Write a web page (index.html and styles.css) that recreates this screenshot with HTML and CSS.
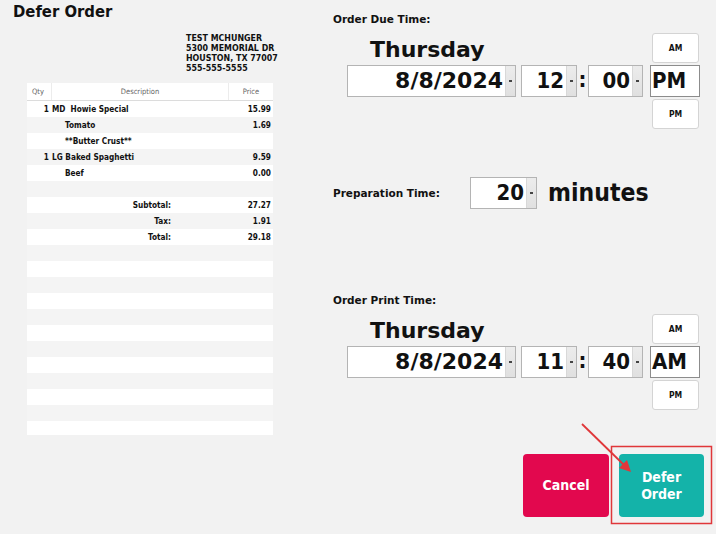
FILE: index.html
```html
<!DOCTYPE html>
<html>
<head>
<meta charset="utf-8">
<link rel="stylesheet" href="styles.css">
</head>
<body>
<div class="page">
  <section class="receipt-pane">
    <h1 class="title">Defer Order</h1>
    <div class="addr">
      <div>TEST MCHUNGER</div>
      <div>5300 MEMORIAL DR</div>
      <div>HOUSTON, TX 77007</div>
      <div>555-555-5555</div>
    </div>
    <div class="ticket">
      <div class="thead">
        <span class="h-qty">Qty</span>
        <span class="h-desc">Description</span>
        <span class="h-price">Price</span>
      </div>
      <div class="tbody">
        <div class="row"><span class="qty">1</span><span class="desc">MD&nbsp; Howie Special</span><span class="price">15.99</span></div>
        <div class="row"><span class="qty"></span><span class="desc mod">Tomato</span><span class="price">1.69</span></div>
        <div class="row"><span class="qty"></span><span class="desc mod">**Butter Crust**</span><span class="price"></span></div>
        <div class="row"><span class="qty">1</span><span class="desc">LG Baked Spaghetti</span><span class="price">9.59</span></div>
        <div class="row"><span class="qty"></span><span class="desc mod">Beef</span><span class="price">0.00</span></div>
        <div class="row"></div>
        <div class="row"><span class="qty"></span><span class="desc sum">Subtotal:</span><span class="price">27.27</span></div>
        <div class="row"><span class="qty"></span><span class="desc sum">Tax:</span><span class="price">1.91</span></div>
        <div class="row"><span class="qty"></span><span class="desc sum">Total:</span><span class="price">29.18</span></div>
        <div class="row"></div>
        <div class="row"></div>
        <div class="row"></div>
        <div class="row"></div>
        <div class="row"></div>
        <div class="row"></div>
        <div class="row"></div>
        <div class="row"></div>
        <div class="row"></div>
        <div class="row"></div>
        <div class="row"></div>
        <div class="row"></div>
        <div class="row"></div>
      </div>
    </div>
  </section>

  <section class="time-pane">
    <div class="label">Order Due Time:</div>
    <div class="picker">
      <div class="pick-top">
        <span class="day">Thursday</span>
        <span class="ampm-btn">AM</span>
      </div>
      <div class="pick-mid">
        <div class="spin date"><span class="val">8/8/2024</span><span class="drop"></span></div>
        <div class="spin hour"><span class="val">12</span><span class="drop"></span></div>
        <span class="colon">:</span>
        <div class="spin minute"><span class="val">00</span><span class="drop"></span></div>
        <div class="ampm-box">PM</div>
      </div>
      <div class="pick-bot">
        <span class="ampm-btn">PM</span>
      </div>
    </div>

    <div class="prep">
      <span class="label prep-label">Preparation Time:</span>
      <div class="spin prep-spin"><span class="val">20</span><span class="drop"></span></div>
      <span class="minutes">minutes</span>
    </div>

    <div class="label print-label">Order Print Time:</div>
    <div class="picker">
      <div class="pick-top">
        <span class="day">Thursday</span>
        <span class="ampm-btn">AM</span>
      </div>
      <div class="pick-mid">
        <div class="spin date"><span class="val">8/8/2024</span><span class="drop"></span></div>
        <div class="spin hour"><span class="val">11</span><span class="drop"></span></div>
        <span class="colon">:</span>
        <div class="spin minute"><span class="val">40</span><span class="drop"></span></div>
        <div class="ampm-box">AM</div>
      </div>
      <div class="pick-bot">
        <span class="ampm-btn">PM</span>
      </div>
    </div>

    <div class="actions">
      <button class="btn cancel">Cancel</button>
      <button class="btn defer">Defer<br>Order</button>
    </div>
  </section>

  <svg class="annot" width="716" height="534" viewBox="0 0 716 534">
    <rect x="611.5" y="446.5" width="100" height="77" fill="none" stroke="#e0373a" stroke-width="1.5"/>
    <line x1="582" y1="424" x2="624" y2="465" stroke="#e0373a" stroke-width="1.8"/>
    <polygon points="631,472 619,468 627,460" fill="#e0373a"/>
  </svg>
</div>
</body>
</html>
```

FILE: styles.css
```css
* { box-sizing: border-box; }

html, body {
  margin: 0;
  padding: 0;
  background: #f2f2f2;
}

body {
  font-family: "DejaVu Sans Condensed", "DejaVu Sans", sans-serif;
  font-stretch: condensed;
  color: #111;
}

.page {
  position: relative;
  width: 716px;
  height: 534px;
  display: flex;
  overflow: hidden;
}

/* ---------- receipt ---------- */
.receipt-pane {
  width: 333px;
  padding: 2px 0 0 13px;
}

.title {
  margin: 0;
  font-size: 16.5px;
  line-height: 20px;
  font-weight: bold;
}

.addr {
  margin: 11px 0 0 173px;
  font-size: 8.8px;
  line-height: 10px;
  font-weight: bold;
}

.ticket {
  margin: 10px 0 0 14px;
  width: 246px;
}

.thead {
  display: grid;
  grid-template-columns: 25px 1fr 44px;
  height: 18px;
  background: #fff;
  border-bottom: 1px solid #dcdcdc;
  font-size: 7.5px;
  color: #666;
  line-height: 17px;
}

.h-qty { padding-left: 5px; border-right: 1px solid #ececec; }
.h-desc { text-align: center; border-right: 1px solid #ececec; }
.h-price { text-align: center; }

.tbody {
  height: 334px;
  overflow: hidden;
}

.row {
  display: grid;
  grid-template-columns: 25px 1fr 44px;
  height: 16px;
  line-height: 16px;
  font-size: 8.2px;
  font-weight: bold;
  background: #fff;
}

.row:nth-child(even) { background: #f4f4f4; }

.qty { text-align: right; padding-right: 3px; }
.desc { padding-left: 0; }
.desc.mod { padding-left: 13px; }
.desc.sum { text-align: right; padding-right: 58px; }
.price { text-align: right; padding-right: 2px; }

/* ---------- time pane ---------- */
.time-pane {
  flex: 1;
  padding-top: 12px;
  display: flex;
  flex-direction: column;
}

.label {
  font-family: "DejaVu Sans", sans-serif;
  font-stretch: normal;
  font-size: 10.5px;
  font-weight: bold;
  line-height: 14px;
}

.picker {
  margin: 7px 0 0 14px;
  width: 353px;
}

.pick-top {
  display: flex;
  justify-content: space-between;
  align-items: flex-end;
  height: 30px;
}

.day {
  margin-left: 23px;
  font-family: "DejaVu Sans", sans-serif;
  font-stretch: normal;
  font-size: 22px;
  font-weight: bold;
  line-height: 26px;
}

.ampm-btn {
  width: 47px;
  height: 30px;
  margin-right: 1px;
  background: #fff;
  border: 1px solid #d4d4d4;
  border-radius: 3px;
  font-size: 8.5px;
  font-weight: bold;
  display: flex;
  align-items: center;
  justify-content: center;
}

.pick-mid {
  display: flex;
  margin-top: 2px;
  height: 32px;
}

.pick-bot {
  display: flex;
  justify-content: flex-end;
  margin-top: 2px;
}

.spin {
  display: flex;
  height: 32px;
  background: #fff;
  border: 1px solid #b4b4b4;
}

.spin .val {
  flex: 1;
  text-align: right;
  padding-right: 2px;
  font-size: 22px;
  font-weight: bold;
  line-height: 30px;
}

.spin.date .val {
  font-family: "DejaVu Sans", sans-serif;
  font-stretch: normal;
}

.drop {
  position: relative;
  width: 10px;
  background: linear-gradient(#ececec, #e0e0e0);
  border-left: 1px solid #d8d8d8;
}

.drop::after {
  content: "";
  position: absolute;
  left: 3px;
  top: 14px;
  width: 3px;
  height: 2px;
  background: #444;
}

.spin.date { width: 169px; }
.spin.hour { width: 56px; margin-left: 5px; }
.spin.minute { width: 55px; }

.colon {
  width: 11px;
  text-align: center;
  font-size: 22px;
  font-weight: bold;
  line-height: 30px;
}

.ampm-box {
  width: 50px;
  margin-left: 7px;
  height: 32px;
  background: #fff;
  border: 1px solid #8c8c8c;
  padding-left: 1px;
  font-size: 22px;
  font-weight: bold;
  line-height: 30px;
}

.prep {
  display: flex;
  align-items: center;
  margin-top: 48px;
  height: 32px;
}

.prep-label { width: 137px; }

.spin.prep-spin { width: 67px; }

.minutes {
  margin-left: 11px;
  font-size: 24.5px;
  font-weight: bold;
  line-height: 30px;
}

.print-label { margin-top: 84px; }

.actions {
  display: flex;
  justify-content: flex-end;
  gap: 10px;
  padding-right: 12px;
  margin-top: 44px;
}

.btn {
  width: 86px;
  height: 63px;
  border: none;
  border-radius: 4px;
  color: #fff;
  font-family: "DejaVu Sans Condensed", "DejaVu Sans", sans-serif;
  font-stretch: condensed;
  font-size: 14px;
  font-weight: bold;
  line-height: 17px;
  padding: 0;
}

.cancel { background: #e2084e; }
.defer { background: #14b3a9; width: 85px; }

.annot {
  position: absolute;
  left: 0;
  top: 0;
  pointer-events: none;
}
```
